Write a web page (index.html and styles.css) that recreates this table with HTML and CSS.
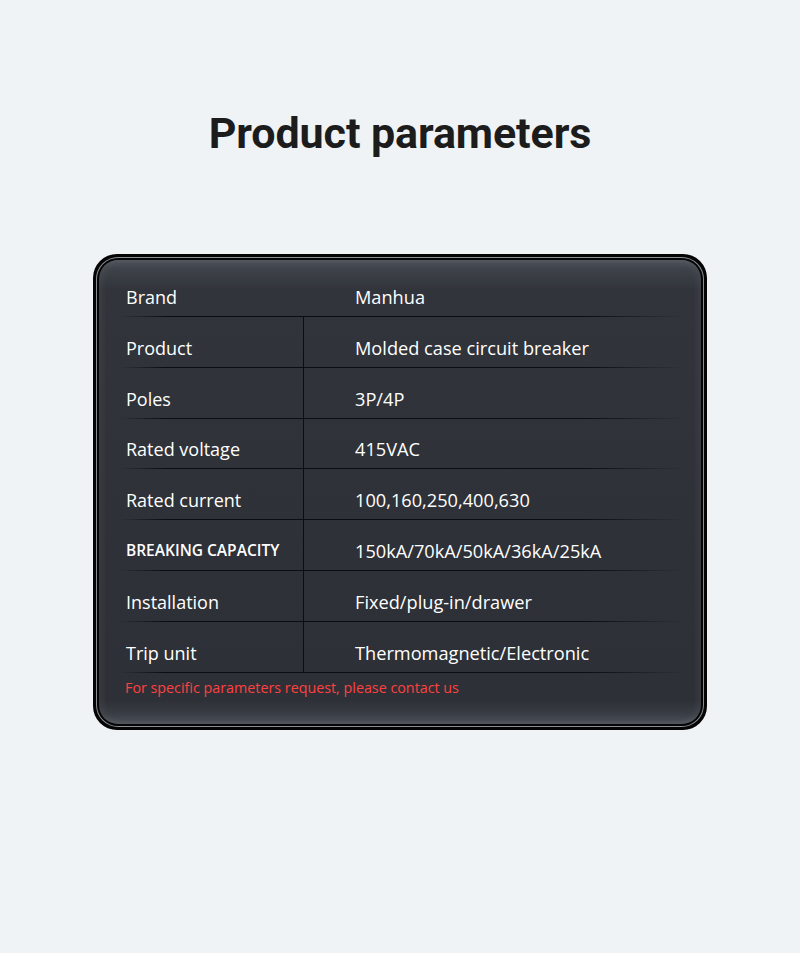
FILE: index.html
```html
<!DOCTYPE html>
<html lang="en">
<head>
<meta charset="utf-8">
<title>Product parameters</title>
<link rel="stylesheet" href="styles.css">
</head>
<body>
<main class="page">
  <h1 class="title">Product parameters</h1>
  <section class="card">
    <div class="ring">
      <div class="panel">
        <div class="table">
          <div class="row first"><div class="label">Brand</div><div class="value">Manhua</div></div>
          <div class="row"><div class="label">Product</div><div class="value">Molded case circuit breaker</div></div>
          <div class="row"><div class="label">Poles</div><div class="value">3P/4P</div></div>
          <div class="row"><div class="label">Rated voltage</div><div class="value">415VAC</div></div>
          <div class="row"><div class="label">Rated current</div><div class="value">100,160,250,400,630</div></div>
          <div class="row"><div class="label caps">BREAKING CAPACITY</div><div class="value">150kA/70kA/50kA/36kA/25kA</div></div>
          <div class="row"><div class="label">Installation</div><div class="value">Fixed/plug-in/drawer</div></div>
          <div class="row"><div class="label">Trip unit</div><div class="value">Thermomagnetic/Electronic</div></div>
        </div>
        <p class="note">For specific parameters request, please contact us</p>
      </div>
    </div>
  </section>
</main>
</body>
</html>
```

FILE: styles.css
```css
* { box-sizing: border-box; }
html, body { margin: 0; padding: 0; }
body {
  background: #f0f3f6;
  width: 800px;
  height: 953px;
  overflow: hidden;
  font-family: "Open Sans", "Noto Sans", sans-serif;
}
.page {
  display: flex;
  flex-direction: column;
  align-items: center;
  padding-top: 105px;
}
.title {
  margin: 0;
  font-family: Roboto, "Noto Sans", sans-serif;
  font-weight: 700;
  font-size: 43px;
  line-height: 56px;
  color: #1c1c1c;
  letter-spacing: -0.1px;
}
.card {
  margin-top: 93px;
  width: 614px;
  background: #050505;
  border-radius: 24px;
  padding: 4px;
}
.ring {
  border-radius: 21px;
  padding: 2px;
  background: #050505;
  box-shadow: 0 0 0 1px #8a8d92;
}
.panel {
  border-radius: 19px;
  padding: 6px 16px 26px 21px;
  background:
    linear-gradient(to bottom, #4e535b 0px, #3d4148 10px, #31343b 30px, #2e3137 60%, #2d3036 calc(100% - 24px), #393d44 calc(100% - 10px), #4d525a 100%);
  box-shadow: inset 4px 0 6px rgba(255,255,255,0.05), inset -4px 0 6px rgba(255,255,255,0.05);
}
.table {
  display: flex;
  flex-direction: column;
}
.row {
  display: flex;
  height: 50.85px;
  position: relative;
  align-items: flex-end;
}
.row::after {
  content: "";
  position: absolute;
  left: 0;
  right: 0;
  bottom: 0;
  height: 1px;
  background: linear-gradient(to right, rgba(10,10,12,0) 0%, #0c0d10 8%, #0c0d10 82%, rgba(10,10,12,0) 100%);
}
.label {
  width: 184px;
  flex: none;
  padding-left: 6px;
  padding-bottom: 8px;
  align-self: stretch;
  display: flex;
  align-items: flex-end;
  border-right: 1px solid #0c0d10;
  color: #ffffff;
  font-size: 18px;
  line-height: 24px;
}
.row.first .label { border-right-color: transparent; }
.label.caps {
  font-size: 15.5px;
  font-weight: 600;
  padding-bottom: 9px;
}
.value {
  padding-left: 51px;
  padding-bottom: 8px;
  color: #ffffff;
  font-size: 18.2px;
  line-height: 24px;
}
.note {
  margin: 0;
  padding: 5px 0 0 5px;
  color: #ff4141;
  font-size: 14.3px;
  line-height: 20px;
}
```
